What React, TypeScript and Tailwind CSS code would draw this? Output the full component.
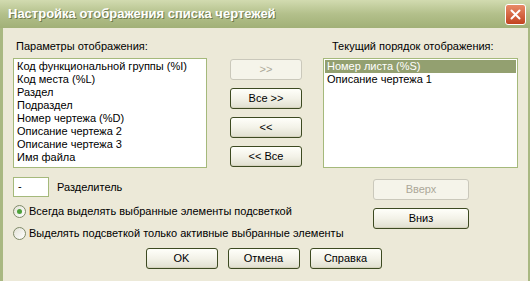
import React from "react";

const leftItems = [
  "Код функциональной группы (%I)",
  "Код места (%L)",
  "Раздел",
  "Подраздел",
  "Номер чертежа (%D)",
  "Описание чертежа 2",
  "Описание чертежа 3",
  "Имя файла",
];

const XpButton = ({
  label,
  disabled = false,
  className = "",
}: {
  label: string;
  disabled?: boolean;
  className?: string;
}) => (
  <div
    className={
      "flex items-center justify-center h-[21px] rounded-[3px] border text-[11px] leading-none " +
      (disabled
        ? "border-[#cac8bb] bg-[#f5f4ea] text-[#aca899] "
        : "border-[#3d4a21] bg-gradient-to-b from-[#fffffa] via-[#f3f2e8] to-[#e0dfcf] text-black shadow-[inset_0_-1px_0_#d6d3bf] ") +
      className
    }
  >
    {label}
  </div>
);

const Radio = ({ checked, label }: { checked: boolean; label: string }) => (
  <div className="flex items-center h-[14px]">
    <div className="w-[13px] h-[13px] rounded-full border border-[#7f8a68] bg-gradient-to-br from-[#e3e2d6] to-white flex items-center justify-center">
      {checked && <div className="w-[5px] h-[5px] rounded-full bg-[#4da13a]" />}
    </div>
    <span className="ml-[3px] text-[11px] text-black">{label}</span>
  </div>
);

export default function App() {
  return (
    <div
      className="w-[530px] h-[281px] flex flex-col overflow-hidden bg-[#a9b882]"
      style={{ fontFamily: '"Liberation Sans", Arial, sans-serif' }}
    >
      {/* title bar */}
      <div className="h-[28px] flex items-center justify-between pl-[8px] pr-[4px] bg-gradient-to-b from-[#d2dbb0] via-[#b3c08b] to-[#a1b077]">
        <span className="text-white font-bold text-[13px] [text-shadow:1px_1px_0_#6e7a4c]">
          Настройка отображения списка чертежей
        </span>
        <div className="w-[21px] h-[21px] rounded-[3px] border border-white bg-gradient-to-b from-[#e88a67] to-[#c2431f] flex items-center justify-center">
          <svg width="11" height="11" viewBox="0 0 11 11">
            <path d="M1.5 1.5 L9.5 9.5 M9.5 1.5 L1.5 9.5" stroke="white" strokeWidth="2" strokeLinecap="round" />
          </svg>
        </div>
      </div>

      {/* body */}
      <div className="flex-1 ml-[3px] mr-[2px] bg-[#ece9d8] pl-[10px] flex flex-col text-[11px] text-black">
        <div className="flex mt-[11px] h-[14px] items-center">
          <span className="w-[310px] pl-[3px]">Параметры отображения:</span>
          <span className="pl-[9px]">Текущий порядок отображения:</span>
        </div>

        <div className="flex mt-[5px]">
          <div className="w-[194px] h-[110px] border border-[#a5b97b] bg-white pt-[1px] pl-[3px]">
            {leftItems.map((t) => (
              <div key={t} className="h-[13px] leading-[13px]">
                {t}
              </div>
            ))}
          </div>
          <div className="ml-[23px] w-[72px] flex flex-col gap-[8px] pt-[1px]">
            <XpButton label=">>" disabled />
            <XpButton label="Все >>" />
            <XpButton label="<<" />
            <XpButton label="<< Все" />
          </div>
          <div className="ml-[21px] w-[195px] h-[110px] border border-[#a5b97b] bg-white p-[1px]">
            <div className="h-[13px] leading-[13px] bg-[#93a070] text-white pl-[2px]">Номер листа (%S)</div>
            <div className="h-[13px] leading-[13px] pl-[2px]">Описание чертежа 1</div>
          </div>
        </div>

        <div className="flex mt-[9px]">
          <div className="flex flex-col">
            <div className="flex items-center h-[20px]">
              <div className="w-[36px] h-[20px] border border-[#a5b97b] bg-white pl-[4px] leading-[16px]">-</div>
              <span className="ml-[8px]">Разделитель</span>
            </div>
            <div className="mt-[7px]">
              <Radio checked label="Всегда выделять выбранные элементы подсветкой" />
            </div>
            <div className="mt-[8px]">
              <Radio checked={false} label="Выделять подсветкой только активные выбранные элементы" />
            </div>
          </div>
          <div className="ml-auto mr-[59px] w-[96px] flex flex-col gap-[8px] pt-[2px]">
            <XpButton label="Вверх" disabled />
            <XpButton label="Вниз" />
          </div>
        </div>

        <div className="flex justify-center gap-[10px] mt-[8px] pr-[14px]">
          <XpButton label="OK" className="w-[72px]" />
          <XpButton label="Отмена" className="w-[72px]" />
          <XpButton label="Справка" className="w-[72px]" />
        </div>
      </div>
    </div>
  );
}
